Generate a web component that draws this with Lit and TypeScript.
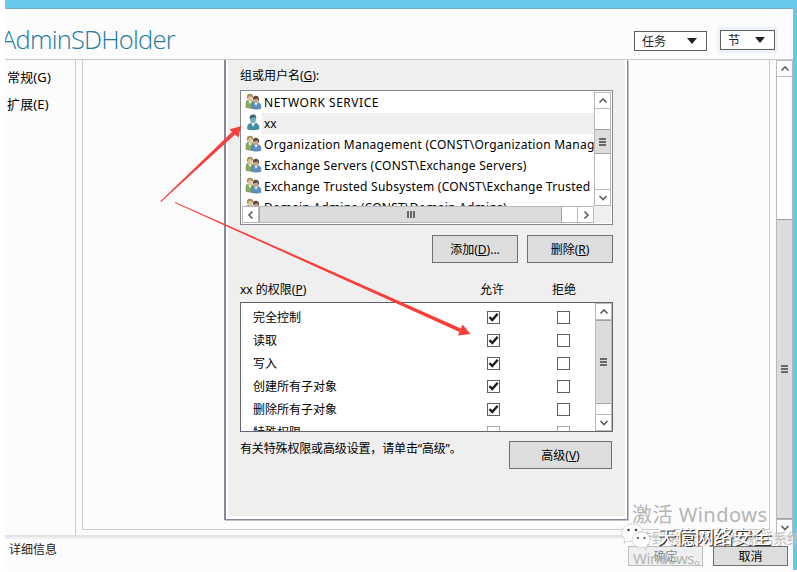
import { LitElement, html, svg, css, nothing } from "lit";
import { customElement, property } from "lit/decorators.js";
import { classMap } from "lit/directives/class-map.js";

const base = css`
  * { box-sizing: border-box; }
  :host { font-family: "Noto Sans", "Noto Sans CJK SC", sans-serif; font-size: 12px; color: #000; }
`;

const chevrons: Record<string, string> = {
  up: "M4.5 9.5 8 6l3.5 3.5",
  down: "M4.5 6 8 9.5 11.5 6",
  left: "M9.5 4.5 6 8l3.5 3.5",
  right: "M6.5 4.5 10 8l-3.5 3.5",
};

@customElement("scroll-bar")
class ScrollBar extends LitElement {
  @property({ type: Boolean, reflect: true }) horizontal = false;
  @property({ type: Number }) before = 0;
  @property({ type: Number }) thumb = 20;
  static styles = [base, css`
    :host { display: flex; flex-direction: column; width: 17px; background: #fff; border: solid #b9b9b9; border-width: 0 1px; flex: none; }
    :host([horizontal]) { flex-direction: row; width: auto; height: 17px; border-width: 1px 0; }
    .btn { flex: none; width: 15px; height: 17px; border: solid #b9b9b9; border-width: 1px 0; display: flex; align-items: center; justify-content: center; }
    :host([horizontal]) .btn { width: 17px; height: 15px; border-width: 0 1px; }
    .btn svg { flex: none; width: 16px; height: 16px; fill: none; stroke: #606060; stroke-width: 1.7; }
    .thumb { flex: none; background: #dcdcdc; border: solid #a2a2a2; border-width: 1px 0; display: flex; flex-direction: column; align-items: center; justify-content: center; gap: 1px; }
    :host([horizontal]) .thumb { flex-direction: row; border-width: 0 1px; }
    .thumb i { width: 7px; height: 2px; background: #686868; }
    :host([horizontal]) .thumb i { width: 2px; height: 7px; }
    .gap { flex: none; }
    .fill { flex: 1; }
  `];
  render() {
    const dim = this.horizontal ? "width" : "height";
    const icon = (k: string) => html`<div class="btn"><svg viewBox="0 0 16 16"><path d=${chevrons[k]} /></svg></div>`;
    return html`${icon(this.horizontal ? "left" : "up")}
      <div class="gap" style="${dim}:${this.before}px"></div>
      <div class="thumb" style="${dim}:${this.thumb}px"><i></i><i></i><i></i></div>
      <div class="fill"></div>${icon(this.horizontal ? "right" : "down")}`;
  }
}

@customElement("principal-icon")
class PrincipalIcon extends LitElement {
  @property({ type: Boolean }) single = false;
  static styles = css`:host { display: block; width: 18px; height: 18px; } svg { display: block; }`;
  render() {
    const group = svg`
      <path d="M1 14.500V10q0-3 3.500-3T10 10v4.500q-4.500 1.500-9 0Z" fill="#86ab62" stroke="#64864a" stroke-width=".5"/>
      <path d="M3.300 7.500 5 11.500 7 7.500Z" fill="#e8efd9"/>
      <ellipse cx="5" cy="4.200" rx="2.600" ry="3.300" fill="#e5c59b"/>
      <path d="M2 5Q1.500.8 5 .7T8 4.500Q6 4 5.500 2.600 3.500 3 2.700 6Z" fill="#a88b52"/>
      <path d="M6.500 15.500V12q0-2.600 3.500-2.800 5.500 0 5.800 3.300v3q-4.500 1.300-9.300 0Z" fill="#5c8fbe" stroke="#3d6690" stroke-width=".5"/>
      <path d="M9.200 9.600 11 13l2-3.400Z" fill="#e7f1fa"/>
      <ellipse cx="10.800" cy="6.700" rx="2.500" ry="3.200" fill="#cda482"/>
      <path d="M8 7Q7.400 2.900 10.800 2.800T14 7l-.6 1.500Q13 6.500 12.500 5.500 10 6 8 7Z" fill="#5d4b41"/>`;
    const one = svg`
      <path d="M2.500 15q-.5-5 3.500-6h4q4.500.8 4 6-5.500 1.800-11.500 0Z" fill="#3f8f9f" stroke="#2c6c7c" stroke-width=".5"/>
      <path d="M6 9 8 13l2.500-4Z" fill="#dceef0"/>
      <ellipse cx="8" cy="5" rx="3" ry="4" fill="#76acb8"/>
      <path d="M4.800 5Q4 .6 8 .4T11.200 5Q10.500 3.500 9.500 2.900 6.500 3.500 4.800 5Z" fill="#35606f"/>`;
    return html`<svg width="18" height="18" viewBox="0 0 18 18">${this.single ? one : group}</svg>`;
  }
}

@customElement("check-cell")
class CheckCell extends LitElement {
  @property({ type: Boolean }) on = false;
  @property({ type: Boolean }) dim = false;
  static styles = css`
    :host { display: block; width: 13px; height: 13px; }
    .box { box-sizing: border-box; width: 13px; height: 13px; border: 1px solid #5f5f5f; background: #fff; }
    .dim { border-color: #ababab; }
    svg { display: block; width: 11px; height: 11px; }
  `;
  render() {
    return html`<div class=${classMap({ box: true, dim: this.dim })}>${this.on
      ? html`<svg viewBox="0 0 11 11"><path d="M1.500 5.200 4.300 8 9.700 1.700" fill="none" stroke="#1c1c1c" stroke-width="2.400"/></svg>` : nothing}</div>`;
  }
}

const principals = [
  { name: "NETWORK SERVICE", ls: 0.52 },
  { name: "xx", single: true, ls: 0 },
  { name: "Organization Management (CONST\\Organization Management)", ls: 0.26 },
  { name: "Exchange Servers (CONST\\Exchange Servers)", ls: 0.25 },
  { name: "Exchange Trusted Subsystem (CONST\\Exchange Trusted Subsystem)", ls: 0.23 },
  { name: "Domain Admins (CONST\\Domain Admins)", ls: 0.25 },
];
const permissions = ["完全控制", "读取", "写入", "创建所有子对象", "删除所有子对象", "特殊权限"];

@customElement("app-root")
class AppRoot extends LitElement {
  static styles = [base, css`
    :host { display: block; width: 797px; height: 572px; background: #fff; overflow: hidden; position: relative; }
    .window { margin-left: 5px; width: 792px; height: 570px; display: flex; flex-direction: column; background: #fcfcfc; border-top: 8px solid #67c9ea; border-right: 4px solid #67c9ea; overflow: hidden; }
    header { flex: none; height: 52px; border-top: 1px solid #75afc4; border-bottom: 1px solid #cbcbcb; display: flex; align-items: flex-start; }
    h1 { margin: 11px auto 0 -4px; font: 300 25.500px/38px "Open Sans", "Noto Sans", sans-serif; color: #237b9c; letter-spacing: -.78px; white-space: nowrap; }
    .drop { height: 20px; margin-top: 22px; border: 1px solid #606060; display: flex; align-items: center; justify-content: space-between; padding: 0 9px 0 7px; background: #fff; color: #222; }
    .drop svg { width: 10px; height: 6px; fill: #222; }
    .tasks { width: 73px; margin-right: 13px; }
    .section { width: 55px; margin-top: 21px; margin-right: 18px; box-shadow: 0 0 0 3px #edf2fd; }
    .body { flex: none; height: 475px; display: flex; }
    nav { width: 71px; border-right: 1px solid #cbcbcb; padding: 4px 0 0 2px; font-size: 13px; line-height: 27px; letter-spacing: .15px; }
    .content { width: 688px; height: 470px; margin-left: 6px; border: 1px solid #cbcbcb; border-top: 0; padding-left: 141px; }
    .sheet { width: 404px; height: 460px; border: solid #858998; border-width: 0 1px 1px 2px; background: #efefef; padding: 0 14px 0 12px; box-shadow: inset 2px -3px #fff, inset -2px 0 #fff, 1px 1px #c0c2cc; display: flex; flex-direction: column; }
    .outer { margin-left: 6px; height: 475px; }
    .caption { height: 30px; padding-top: 7px; padding-left: 2px; line-height: 18px; }
    .groups { margin-left: 2px; width: 373px; height: 135px; flex: none; border: 1px solid #828790; background: #fff; padding: 1px; display: grid; grid-template-columns: 352px 17px; grid-template-rows: 114px 17px; }
    .rows { overflow: hidden; }
    .principal { display: grid; grid-template-columns: 20px 1fr; height: 21px; }
    .principal principal-icon { margin: 1px 0 0 3px; }
    .principal span { height: 21px; line-height: 22px; padding-left: 2px; white-space: pre; overflow: hidden; }
    .selected span { background: #efefef; line-height: 22px; }
    .corner { background: #efefef; }
    .actions { display: flex; gap: 9px; justify-content: flex-end; padding-top: 10px; width: 375px; }
    .btn { height: 28px; border: 1px solid #707070; background: #dddddd; display: flex; align-items: center; justify-content: center; white-space: pre; }
    .actions .btn { width: 86px; }
    .heads { height: 39px; padding-left: 2px; display: grid; grid-template-columns: 240px 72px 1fr; line-height: 18px; padding-top: 18px; }
    .perms { margin-left: 2px; width: 373px; height: 130px; flex: none; border: 1px solid #62656b; background: #fff; display: flex; overflow: hidden; }
    .perms .rows { width: 354px; padding-top: 3px; }
    .perm { height: 23px; display: grid; grid-template-columns: 234px 70px 1fr; padding-left: 12px; align-items: center; line-height: 20px; }
    .note { display: flex; justify-content: space-between; padding: 9px 0 0 2px; width: 374px; }
    .note span { line-height: 16px; white-space: nowrap; letter-spacing: -.15px; }
    .note .btn { width: 103px; flex: none; }
    footer { flex: 1; border-top: 2px solid #e3e3e3; box-shadow: inset 0 2px #efefef; display: flex; align-items: flex-start; padding: 9px 5px 0 4px; gap: 10px; }
    footer span { margin-right: auto; line-height: 8px; color: #222; }
    footer .btn { width: 75px; height: 20px; }
    .disabled { color: #8a8a8a; border-color: #bebebe; background: #efefef; }
    .overlay { position: absolute; left: 0; top: 0; width: 797px; height: 572px; pointer-events: none; }
  `];
  render() {
    const arrow = html`<svg viewBox="0 0 10 6"><path d="M0 0h10L5 6Z" /></svg>`;
    return html`
      <div class="window">
        <header><h1>AdminSDHolder</h1><div class="drop tasks">任务${arrow}</div><div class="drop section">节${arrow}</div></header>
        <div class="body">
          <nav><div>常规(G)</div><div>扩展(E)</div></nav>
          <div class="content"><section class="sheet">
            <div class="caption">组或用户名(<u>G</u>):</div>
            <div class="groups">
              <div class="rows">${principals.map(p => html`<div class=${classMap({ principal: true, selected: !!p.single })}>
                <principal-icon ?single=${!!p.single}></principal-icon><span style="letter-spacing:${p.ls}px">${p.name}</span></div>`)}</div>
              <scroll-bar .before=${20} .thumb=${25}></scroll-bar>
              <scroll-bar horizontal .thumb=${303}></scroll-bar><div class="corner"></div>
            </div>
            <div class="actions"><div class="btn">添加(<u>D</u>)...</div><div class="btn">删除(<u>R</u>)</div></div>
            <div class="heads"><span>xx 的权限(<u>P</u>)</span><span>允许</span><span>拒绝</span></div>
            <div class="perms"><div class="rows">${permissions.map((p, i) => html`<div class="perm"><span>${p}</span>
              <check-cell ?on=${i < 5} ?dim=${i === 5}></check-cell><check-cell ?dim=${i === 5}></check-cell></div>`)}</div>
              <scroll-bar .thumb=${84}></scroll-bar></div>
            <div class="note"><span>有关特殊权限或高级设置，请单击“高级”。</span><div class="btn">高级(<u>V</u>)</div></div>
          </section></div>
          <scroll-bar class="outer" .before=${142} .thumb=${300}></scroll-bar>
        </div>
        <footer><span>详细信息</span><div class="btn disabled">确定</div><div class="btn">取消</div></footer>
      </div>
      <svg class="overlay" viewBox="0 0 797 572">
        <g fill="#fa3e3a">
          <path d="M160 201.500 232 132 229.500 129.500 241 126 238.500 137.500 235 134.500 161 202Z"/>
          <path d="M175 202 461 328.500 462.500 324.500 470.500 334 458 335.500 459.500 332 175 203Z"/>
        </g>
        <g fill="#b4b4b4" font-family="Noto Sans, Noto Sans CJK SC, sans-serif">
          <text x="632" y="522" font-size="20" textLength="135">激活 Windows</text>
          <text x="637" y="544" font-size="15" textLength="165" fill="#c2c2c2">转到“操作中心”以激活系统</text>
          <text x="633" y="564" font-size="15" textLength="76">Windows。</text>
        </g>
        <g fill="#fff" stroke="#aaa" stroke-width=".7" stroke-dasharray="2 1">
          <path d="M624 543l1-4q-4-3-3-7 2-8 10-8 9 0 11 7-10 2-10 10-4 1-6 0Z"/>
          <path d="M646 550l-1-3q-11 2-13-6 1-9 9-9t9 8q0 3-3 5Z"/>
        </g>
        <g fill="#444"><circle cx="628.500" cy="530" r="1.300"/><circle cx="636" cy="530" r="1.300"/><circle cx="638" cy="538" r="1.100"/><circle cx="644.500" cy="538" r="1.100"/></g>
        <g font-family="Noto Sans CJK SC, sans-serif" font-size="19">
          <text x="658.200" y="545.200" textLength="114" fill="#333">天億网络安全</text>
          <text x="657" y="544" textLength="114" fill="#fff">天億网络安全</text>
        </g>
      </svg>`;
  }
}
